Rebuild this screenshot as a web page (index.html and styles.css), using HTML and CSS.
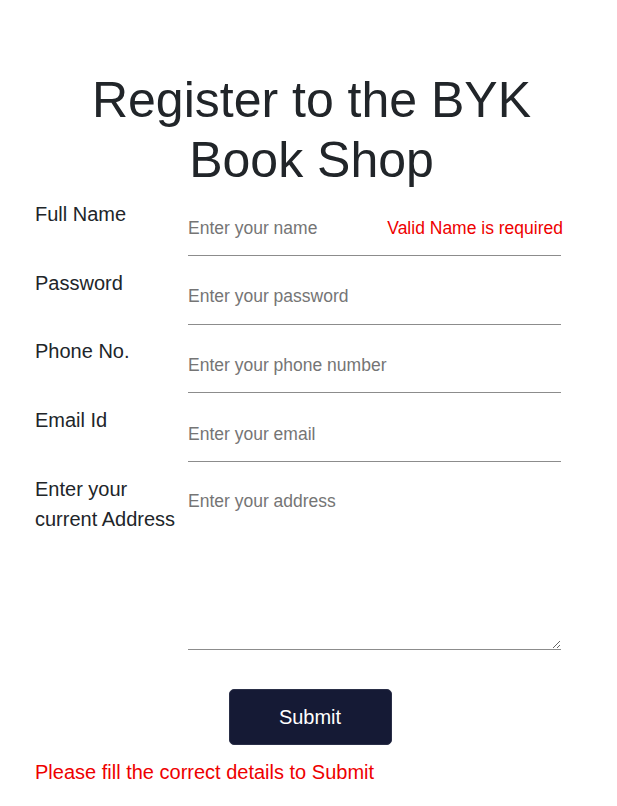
FILE: index.html
```html
<!DOCTYPE html>
<html lang="en">
<head>
<meta charset="utf-8">
<title>Register - BYK Book Shop</title>
<link rel="stylesheet" href="styles.css">
</head>
<body>
<main class="page">
  <h1 class="title">Register to the BYK Book Shop</h1>
  <form class="form" novalidate>
    <div class="row">
      <label class="label" for="name">Full Name</label>
      <div class="field">
        <input class="input" id="name" type="text" placeholder="Enter your name">
        <span class="field-error">Valid Name is required</span>
      </div>
    </div>
    <div class="row">
      <label class="label" for="password">Password</label>
      <div class="field">
        <input class="input" id="password" type="password" placeholder="Enter your password">
      </div>
    </div>
    <div class="row">
      <label class="label" for="phone">Phone No.</label>
      <div class="field">
        <input class="input" id="phone" type="text" placeholder="Enter your phone number">
      </div>
    </div>
    <div class="row">
      <label class="label" for="email">Email Id</label>
      <div class="field">
        <input class="input" id="email" type="email" placeholder="Enter your email">
      </div>
    </div>
    <div class="row">
      <label class="label" for="address">Enter your current Address</label>
      <div class="field">
        <textarea class="input textarea" id="address" placeholder="Enter your address"></textarea>
      </div>
    </div>
    <div class="actions">
      <button class="submit" type="button">Submit</button>
    </div>
    <p class="form-error">Please fill the correct details to Submit</p>
  </form>
</main>
</body>
</html>
```
FILE: styles.css
```css
* {
  box-sizing: border-box;
}

html, body {
  margin: 0;
  padding: 0;
  background: #ffffff;
}

body {
  font-family: "Liberation Sans", Arial, sans-serif;
  color: #212529;
}

.page {
  padding: 70px 0 0 0;
}

.title {
  margin: 0;
  padding: 0 56px 0 62px;
  font-size: 50px;
  font-weight: 400;
  line-height: 1.2;
  text-align: center;
  color: #212529;
}

.form {
  margin-top: 9px;
  padding: 0 56px 0 35px;
}

.row {
  display: flex;
  align-items: flex-start;
  margin-bottom: 11.7px;
}

.label {
  flex: 0 0 153px;
  font-size: 20px;
  line-height: 30px;
  color: #212529;
}

.field {
  position: relative;
  flex: 1 1 auto;
}

.input {
  display: block;
  width: 100%;
  height: 57px;
  margin: 0;
  padding: 16px 0 14px 0;
  border: none;
  border-bottom: 1px solid #8c8c8c;
  border-radius: 0;
  outline: none;
  background: transparent;
  font-family: "Liberation Sans", Arial, sans-serif;
  font-size: 17.5px;
  line-height: 1.5;
  color: #212529;
}

.input::placeholder {
  color: #757575;
  opacity: 1;
}

.textarea {
  height: 176.5px;
  padding-top: 14px;
  resize: vertical;
}

.field-error {
  position: absolute;
  top: 16px;
  right: -2px;
  font-size: 17.5px;
  line-height: 1.5;
  color: #ee0000;
}

.actions {
  display: flex;
  justify-content: center;
  margin-top: 39px;
  padding-left: 24px;
}

.submit {
  width: 163px;
  height: 56px;
  border: 1px solid #2a2f48;
  border-radius: 5px;
  background: #151a35;
  color: #ffffff;
  font-family: "Liberation Sans", Arial, sans-serif;
  font-size: 20px;
  line-height: 1.5;
  cursor: pointer;
}

.form-error {
  margin: 12px 0 0 0;
  font-size: 20px;
  line-height: 30px;
  color: #ee0000;
}
```
